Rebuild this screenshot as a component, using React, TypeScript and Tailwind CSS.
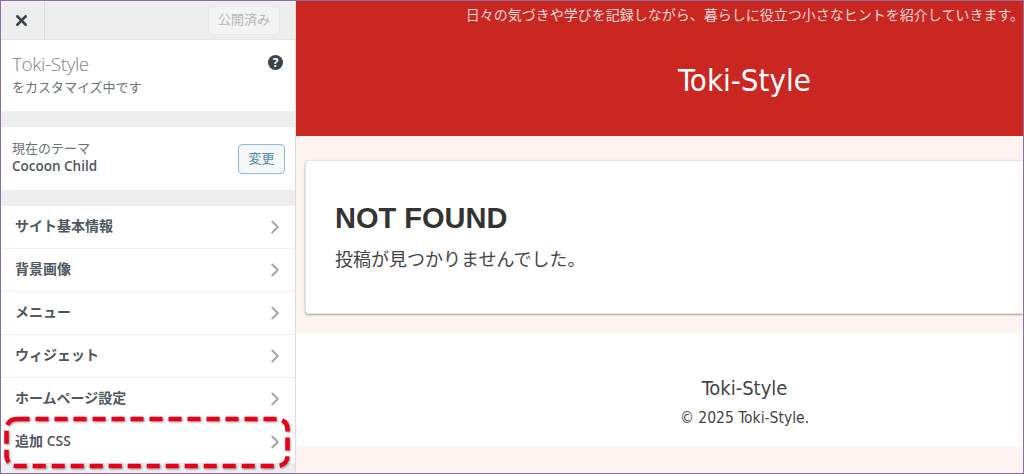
import { ChevronRight, X } from "lucide-react";

const items = ["サイト基本情報", "背景画像", "メニュー", "ウィジェット", "ホームページ設定", "追加 CSS"];
const ui = "font-['Open_Sans','Noto_Sans_CJK_JP',sans-serif]";
const site = "font-['DejaVu_Sans_Condensed','DejaVu_Sans','Noto_Sans_CJK_JP',sans-serif]";

export default function App() {
  return (
    <div className="relative flex h-[474px] w-[1024px] overflow-hidden border border-[#8d6f9f] bg-[#fdf3f1]">
      <aside className={`${ui} flex w-[295px] shrink-0 flex-col border-r border-[#dcdcde] bg-[#eeeeee] text-[#50575e]`}>
        <div className="flex h-[39px] items-center justify-between border-b border-[#e4e4e4]">
          <div className="flex h-full w-[44px] items-center justify-center border-r border-[#dcdcde] pr-[2px]">
            <X size={17} strokeWidth={3.5} className="text-[#3c434a]" />
          </div>
          <div className="mr-[15px] flex h-[29px] w-[72px] items-center justify-center rounded-[3px] border border-[#e8e8e8] bg-[#f3f3f3] text-[13px] text-[#b4b8bb]">
            公開済み
          </div>
        </div>
        <section className="flex h-[71px] items-start justify-between bg-white pl-[11px] pr-[12px] pt-[10px]">
          <div>
            <div className="text-[19px] font-light leading-[28px] tracking-[-0.4px] text-[#7d858b]">Toki-Style</div>
            <div className="text-[13px] leading-[19px] text-[#6b7278]">をカスタマイズ中です</div>
          </div>
          <div className="mt-[5px] flex h-[15px] w-[15px] items-center justify-center rounded-full bg-[#3c434a] text-[12px] font-bold leading-none text-white">?</div>
        </section>
        <section className="mt-[16px] flex h-[63px] items-center justify-between bg-white pb-[3px] pl-[11px] pr-[10px]">
          <div>
            <div className="text-[13px] leading-[18px] text-[#6b7278]">現在のテーマ</div>
            <div className="text-[13.5px] font-semibold leading-[19px] text-[#50575e]">Cocoon Child</div>
          </div>
          <div className="mt-[3px] flex h-[30px] w-[47px] items-center justify-center rounded-[4px] border border-[#8fbbdb] bg-[#f6f7f7] text-[13px] text-[#4c8bba]">変更</div>
        </section>
        <ul className="mt-[16px] flex flex-col">
          {items.map((t) => (
            <li key={t} className="flex h-[43px] items-center justify-between border-b border-[#eeeeee] bg-white pl-[14px] pr-[9px] text-[14px] font-semibold text-[#50575e]">
              <span className="mb-[3px]">{t}</span>
              <ChevronRight size={22} strokeWidth={2} className="mb-[1px] text-[#a0a5aa]" />
            </li>
          ))}
        </ul>
      </aside>
      <main className={`${site} flex min-w-0 flex-1 flex-col`}>
        <header className="h-[135px] bg-[#cb2722] text-white">
          <div className="-mr-[1px] pt-[4px] text-right text-[14px] leading-[20px] text-[#f7dcda] whitespace-nowrap">日々の気づきや学びを記録しながら、暮らしに役立つ小さなヒントを紹介していきます。</div>
          <div className="mt-[36px] pl-[170px] text-center text-[31px] leading-[38px]">Toki-Style</div>
        </header>
        <article className="mt-[24px] ml-[9px] h-[154px] rounded-l-[4px] border border-r-0 border-[#e6e2e2] bg-white pl-[29px] pt-[41px] text-[#444444] shadow-[0_1px_2px_rgba(0,0,0,0.35)]">
          <h1 className="font-['Liberation_Sans',sans-serif] text-[29px] font-bold leading-[33px] text-[#333333]">NOT FOUND</h1>
          <p className="mt-[12px] text-[18px] leading-[26px]">投稿が見つかりませんでした。</p>
        </article>
        <footer className="mt-[19px] flex h-[114px] flex-col items-center bg-white pl-[170px] pt-[42px] text-[#444444]">
          <div className="text-[20px] leading-[26px]">Toki-Style</div>
          <div className="mt-[7px] text-[15.5px] leading-[20px]">© 2025 Toki-Style.</div>
        </footer>
      </main>
      <svg className="absolute left-0 top-0 h-[473px] w-[300px] drop-shadow-[1px_1px_1px_rgba(0,0,0,0.4)]" viewBox="0 0 300 473" fill="none">
        <rect x="5.5" y="418" width="281" height="47" rx="10" stroke="#e6001a" strokeWidth="4.5" strokeDasharray="13 6" />
      </svg>
    </div>
  );
}
